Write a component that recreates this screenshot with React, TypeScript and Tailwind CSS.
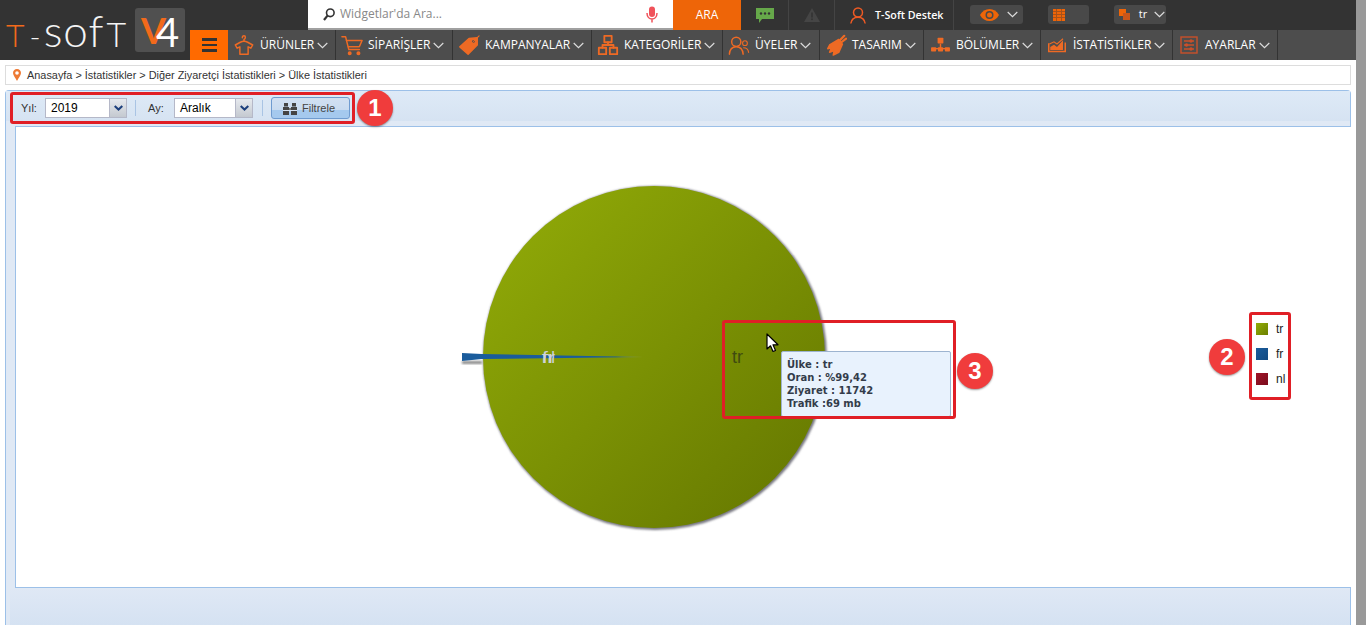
import type { ReactNode } from "react";

const ORANGE = "#ee6a24";

function Glyph({ children, size = 22 }: { children: ReactNode; size?: number }) {
  return (
    <svg width={size} height={size} viewBox="0 0 24 24" fill="none" stroke={ORANGE} strokeWidth={1.6} strokeLinecap="round" strokeLinejoin="round">
      {children}
    </svg>
  );
}

function Chevron({ className = "" }: { className?: string }) {
  return (
    <svg width="11" height="7" viewBox="0 0 11 7" fill="none" stroke="#dcdcdc" strokeWidth="1.2" className={className}>
      <polyline points="0.7,1 5.5,5.6 10.3,1" />
    </svg>
  );
}

const navItems: { label: string; width: string; icon: ReactNode }[] = [
  {
    label: "ÜRÜNLER",
    width: "w-[108px]",
    icon: (
      <Glyph>
        <path d="M8 9 L2.5 12 L4.5 15.5 L7.5 14 V22 H16.5 V14 L19.5 15.5 L21.5 12 L16 9 Q12 7 8 9 Z" />
        <path d="M12 8 V6 C14 5 14 2 12 2 C10.5 2 10.2 3 10.2 4" />
      </Glyph>
    ),
  },
  {
    label: "SİPARİŞLER",
    width: "w-[117px]",
    icon: (
      <Glyph>
        <path d="M1 3 H5 L8.5 17 H20" />
        <path d="M6 7 H23 L20 14 H8" />
        <circle cx="9.5" cy="21" r="1.4" fill={ORANGE} />
        <circle cx="19" cy="21" r="1.4" fill={ORANGE} />
      </Glyph>
    ),
  },
  {
    label: "KAMPANYALAR",
    width: "w-[139px]",
    icon: (
      <Glyph>
        <path d="M2 14 L12 5 L21 4 L21 12 L11 22 Z" fill={ORANGE} />
        <circle cx="17" cy="8" r="1.5" fill="#4d4d4d" stroke="none" />
        <path d="M17 8 L23 2" strokeWidth="1.2" />
      </Glyph>
    ),
  },
  {
    label: "KATEGORİLER",
    width: "w-[131px]",
    icon: (
      <Glyph>
        <rect x="8" y="2" width="8" height="7" strokeWidth="2" />
        <rect x="2" y="15" width="8" height="7" strokeWidth="2" />
        <rect x="14" y="15" width="8" height="7" strokeWidth="2" />
        <path d="M6 15 V12 H18 V15 M12 9 V12" strokeWidth="2" />
      </Glyph>
    ),
  },
  {
    label: "ÜYELER",
    width: "w-[97px]",
    icon: (
      <Glyph>
        <circle cx="9" cy="8.5" r="5" />
        <path d="M1.5 22 C2 16 5 14 9 14 C13 14 16 16 16.5 22" />
        <circle cx="18.5" cy="10" r="2.6" strokeWidth="1.2" />
        <path d="M17 15 C20 15 22 17 22.5 20" strokeWidth="1.2" />
      </Glyph>
    ),
  },
  {
    label: "TASARIM",
    width: "w-[104px]",
    icon: (
      <Glyph>
        <path d="M5 12 L15 6 L19 11 L15 20 L9 23 L10 18 L5 20 L7 15 L3 16 Z" fill={ORANGE} />
        <path d="M16 7 L21 2 M18 9 L23 5" strokeWidth="2.4" />
      </Glyph>
    ),
  },
  {
    label: "BÖLÜMLER",
    width: "w-[117px]",
    icon: (
      <svg width="19" height="16" viewBox="0 0 26 22" fill={ORANGE}>
        <rect x="9" y="1" width="8" height="8" rx="1" />
        <rect x="12" y="9" width="2" height="7" />
        <rect x="3" y="15" width="20" height="2" />
        <rect x="0" y="14" width="7" height="6" rx="1" />
        <rect x="9.5" y="14" width="7" height="6" rx="1" />
        <rect x="19" y="14" width="7" height="6" rx="1" />
      </svg>
    ),
  },
  {
    label: "İSTATİSTİKLER",
    width: "w-[132px]",
    icon: (
      <svg width="18" height="15" viewBox="0 0 24 20" fill="none" stroke={ORANGE} strokeWidth="1.4">
        <path d="M1 7 V17 M23 6 V17 M0 18 H24" strokeWidth="2" />
        <path d="M3 16 V12 L8 9 L12 12 L20 3 V16 Z" fill={ORANGE} stroke="none" />
        <path d="M2 8 L8 5 L12 8 L20 1" />
      </svg>
    ),
  },
  {
    label: "AYARLAR",
    width: "w-[105px]",
    icon: (
      <svg width="18" height="18" viewBox="0 0 18 18" fill="none" stroke="#c9502a" strokeWidth="1.4">
        <rect x="1" y="1" width="16" height="16" />
        <path d="M4 5 H14 M4 9 H14 M4 13 H14" />
        <circle cx="11" cy="5" r="1" fill="#c9502a" />
        <circle cx="6.5" cy="9" r="1" fill="#c9502a" />
        <circle cx="11" cy="13" r="1" fill="#c9502a" />
      </svg>
    ),
  },
];

function Badge({ n, className }: { n: number; className: string }) {
  return (
    <div className={`absolute w-[36px] h-[36px] rounded-full bg-[#f03c3c] shadow-[0_1px_2px_rgba(0,0,0,0.4)] flex items-center justify-center text-white text-[24px] font-bold ${className}`}>
      {n}
    </div>
  );
}

function SelectBox({ value, width }: { value: string; width: string }) {
  return (
    <div className={`${width} h-[20px] bg-white border border-[#b5b8c8] flex items-center`}>
      <span className="flex-1 pl-[5px] text-[12px] text-black">{value}</span>
      <div className="w-[17px] h-full bg-gradient-to-b from-[#e6e9ee] to-[#c4c9d0] border-l border-[#b5b8c8] flex items-center justify-center">
        <svg width="9" height="6" viewBox="0 0 9 6" fill="none" stroke="#1c3f7c" strokeWidth="2">
          <polyline points="0.7,1 4.5,4.6 8.3,1" />
        </svg>
      </div>
    </div>
  );
}

export default function App() {
  return (
    <div className="w-[1366px] h-[625px] overflow-hidden flex bg-white font-['Liberation_Sans',sans-serif] relative">
      <div className="w-[1356px] flex flex-col">
        {/* header */}
        <div className="h-[60px] bg-[#333333] flex">
          <div className="w-[190px] flex items-start pl-[6px] pt-[8px]">
            <div className="w-[129px] h-[44px] flex items-baseline font-['Lato',sans-serif] font-light text-[#f4f4f4] leading-[44px] whitespace-nowrap">
              <span className="text-[#f26a1b] text-[32px]">T</span>
              <span className="text-[30px] ml-[5px]">-</span>
              <span className="text-[44px] ml-[3px] tracking-[1px]">sof</span>
              <span className="text-[34px] ml-[2px]">T</span>
            </div>
            <div className="w-[50px] h-[44px] rounded-[3px] bg-[#505050] flex items-center justify-center font-['Lato',sans-serif] leading-none">
              <span className="text-[#f26a1b] text-[36px] font-bold">V</span>
              <span className="text-white text-[40px] -ml-[10px] mt-[3px]">4</span>
            </div>
          </div>
          <div className="flex-1 flex flex-col">
            <div className="h-[30px] flex text-white font-['Open_Sans',sans-serif]">
              <div className="ml-[118px] w-[365px] h-[30px] bg-white border-b-2 border-[#a0a0a0] flex items-center pl-[15px] pr-[15px] gap-[5px]">
                <svg width="12" height="13" viewBox="0 0 12 13" fill="none" stroke="#333" strokeWidth="1.6">
                  <circle cx="7.3" cy="4.8" r="3.8" />
                  <path d="M4.5 7.6 L1 12" strokeWidth="2.2" />
                </svg>
                <span className="flex-1 text-[12px] text-[#888]">Widgetlar'da Ara...</span>
                <svg width="12" height="17" viewBox="0 0 12 17" fill="none" stroke="#f0525a" strokeWidth="1.5">
                  <rect x="3" y="0.5" width="6" height="10.5" rx="3" fill="#f0525a" stroke="none" />
                  <path d="M1 7 C1 15 11 15 11 7 M6 13 V16.5" />
                </svg>
              </div>
              <div className="w-[68px] bg-[#ee6508] flex items-center justify-center text-[12px]">ARA</div>
              <div className="w-[48px] border-r border-[#444] flex items-center justify-center">
                <svg width="18" height="15" viewBox="0 0 18 15" fill="#66a84a">
                  <path d="M0 0 H18 V11 H6 L3 15 V11 H0 Z" />
                  <circle cx="5" cy="5.5" r="1.2" fill="#333" />
                  <circle cx="9" cy="5.5" r="1.2" fill="#333" />
                  <circle cx="13" cy="5.5" r="1.2" fill="#333" />
                </svg>
              </div>
              <div className="w-[46px] border-r border-[#444] flex items-center justify-center">
                <svg width="16" height="14" viewBox="0 0 16 14" fill="#454545">
                  <path d="M8 0 L16 14 H0 Z" />
                  <rect x="7.2" y="4.5" width="1.6" height="5" fill="#333" />
                  <rect x="7.2" y="10.5" width="1.6" height="1.6" fill="#333" />
                </svg>
              </div>
              <div className="w-[119px] border-r border-[#444] flex items-center pl-[15px] gap-[9px]">
                <svg width="16" height="17" viewBox="0 0 16 17" fill="none" stroke="#ee5a24" strokeWidth="1.5">
                  <circle cx="8" cy="5.5" r="4.5" />
                  <path d="M0.8 16.5 C1.5 12 4 10.3 8 10.3 C12 10.3 14.5 12 15.2 16.5" />
                </svg>
                <span className="text-[10.7px] font-semibold whitespace-nowrap">T-Soft Destek</span>
              </div>
              <div className="ml-[16px] mt-[5px] w-[53px] h-[19px] bg-[#494949] rounded-[3px] flex items-center pl-[10px] justify-between pr-[5px]">
                <svg width="19" height="12" viewBox="0 0 19 12" fill="#ee6508">
                  <path d="M0 6 C4 -2 15 -2 19 6 C15 14 4 14 0 6 Z" />
                  <circle cx="9.5" cy="6" r="4" fill="#494949" />
                  <circle cx="9.5" cy="6" r="2.5" fill="#ee6508" />
                </svg>
                <Chevron />
              </div>
              <div className="ml-[25px] mt-[5px] w-[41px] h-[19px] bg-[#494949] rounded-[3px] flex items-center pl-[5px]">
                <div className="grid grid-cols-3 grid-rows-4 gap-px w-[12px] h-[12px] bg-[#a8521a]">
                  {Array.from({ length: 12 }).map((_, i) => (
                    <div key={i} className="bg-[#ee6508]" />
                  ))}
                </div>
              </div>
              <div className="ml-[25px] mt-[5px] w-[52px] h-[19px] bg-[#494949] rounded-[3px] flex items-center pl-[5px] pr-[1px] justify-between">
                <svg width="11" height="11" viewBox="0 0 11 11" fill="#ee6508">
                  <rect x="0" y="0" width="7" height="7" />
                  <rect x="4" y="4" width="7" height="7" fill="#c9561a" />
                </svg>
                <span className="text-[11px] ml-[2px]">tr</span>
                <Chevron />
              </div>
            </div>
            <div className="h-[30px] bg-[#4d4d4d] flex text-white font-['Open_Sans',sans-serif] text-[12px]">
              <div className="w-[38px] bg-[#ff6a00] flex flex-col items-center justify-center gap-[3px]">
                <div className="w-[15px] h-[2.5px] bg-[#333]" />
                <div className="w-[15px] h-[2.5px] bg-[#333]" />
                <div className="w-[15px] h-[2.5px] bg-[#333]" />
              </div>
              {navItems.map((item) => (
                <div key={item.label} className={`${item.width} shrink-0 border-r border-[#333] flex items-center whitespace-nowrap`}>
                  <div className="w-[32px] flex items-center justify-center">{item.icon}</div>
                  <span>{item.label}</span>
                  <Chevron className="ml-[3px] mt-[1px]" />
                </div>
              ))}
            </div>
          </div>
        </div>

        {/* breadcrumb */}
        <div className="mt-[5px] ml-[5px] w-[1346px] h-[20px] border border-[#ddd] bg-white flex items-center pl-[7px] gap-[6px] text-[10.9px] text-[#333]">
          <svg width="8" height="12" viewBox="0 0 8 12">
            <path d="M4 0 C1.5 0 0 1.8 0 4 C0 6.5 2.5 8.5 4 12 C5.5 8.5 8 6.5 8 4 C8 1.8 6.5 0 4 0 Z" fill="#ee7a34" />
            <circle cx="4" cy="4" r="1.8" fill="#fff" />
          </svg>
          <span>Anasayfa &gt; İstatistikler &gt; Diğer Ziyaretçi İstatistikleri &gt; Ülke İstatistikleri</span>
        </div>

        {/* panel */}
        <div className="mt-[5px] ml-[5px] w-[1346px] flex-1 border border-[#9cc0e8] border-b-0 rounded-t-[4px] bg-[#e0e9f5] flex flex-col">
          <div className="h-[30px] pl-[15px] pt-[4px] flex items-center text-[11px] text-[#333] bg-gradient-to-b from-[#deeaf7] to-[#d6e3f2] shrink-0">
            <span className="w-[24px]">Yıl:</span>
            <SelectBox value="2019" width="w-[82px]" />
            <div className="w-px h-[16px] bg-[#a9c4e4] ml-[8px] mr-[12px]" />
            <span className="w-[26px]">Ay:</span>
            <SelectBox value="Aralık" width="w-[79px]" />
            <div className="w-px h-[16px] bg-[#a9c4e4] ml-[9px] mr-[8px]" />
            <div className="w-[79px] h-[22px] border border-[#6f9bd0] rounded-[3px] bg-[linear-gradient(#d2e0f2_0%,#c9dbf0_58%,#a5c9ee_60%,#a5c9ee_100%)] flex items-center pl-[11px] gap-[5px] text-[11px] text-[#444]">
              <svg width="14" height="13" viewBox="0 0 14 13" fill="#444">
                <rect x="0" y="5" width="6" height="8" />
                <rect x="8" y="5" width="6" height="8" />
                <rect x="1" y="1" width="4" height="3.5" />
                <rect x="9" y="1" width="4" height="3.5" />
                <rect x="6" y="6" width="2" height="3" fill="#777" />
                <rect x="0" y="8" width="14" height="1" fill="#d5e2f2" />
              </svg>
              Filtrele
            </div>
          </div>

          <div className="mt-[5px] ml-[9px] w-[1336px] h-[462px] bg-white border border-[#9cc0e8] border-r-0 relative shrink-0">
            <svg width="380" height="360" viewBox="0 0 380 360" className="absolute left-[437px] top-[51px]">
              <defs>
                <linearGradient id="pieGreen" x1="0" y1="0" x2="1" y2="1">
                  <stop offset="0%" stopColor="#93ad08" />
                  <stop offset="100%" stopColor="#637500" />
                </linearGradient>
                <linearGradient id="pieBlue" x1="0" y1="0" x2="1" y2="0">
                  <stop offset="0%" stopColor="#1a5c9c" />
                  <stop offset="85%" stopColor="#1a5c9c" />
                  <stop offset="100%" stopColor="#a8b070" />
                </linearGradient>
                <filter id="soft">
                  <feGaussianBlur stdDeviation="1" />
                </filter>
              </defs>
              <circle cx="202" cy="180" r="172" fill="#777780" filter="url(#soft)" />
              <circle cx="201" cy="179" r="171" fill="url(#pieGreen)" />
              <rect x="9" y="183" width="20" height="3" fill="#8a8a8a" filter="url(#soft)" />
              <polygon points="9,175 29,176 190,179 29,181 9,183" fill="url(#pieBlue)" />
              <text x="89" y="185" fontSize="16" fill="#cfd3d8" fontFamily="Liberation Sans" textLength="13" lengthAdjust="spacingAndGlyphs">fr</text>
              <text x="89" y="185" fontSize="16" fill="#cfd3d8" fontFamily="Liberation Sans" textLength="13" lengthAdjust="spacingAndGlyphs">nl</text>
              <text x="279" y="185" fontSize="18" fill="#3f4a10" fontFamily="Liberation Sans">tr</text>
            </svg>

            {/* legend */}
            <div className="absolute left-[1240px] top-[196px] flex flex-col gap-[13px] text-[12px] text-[#222]">
              <div className="flex items-center gap-[8px] h-[12px]"><div className="w-[12px] h-[12px] bg-gradient-to-br from-[#93ad08] to-[#6b7f00]" />tr</div>
              <div className="flex items-center gap-[8px] h-[12px]"><div className="w-[12px] h-[12px] bg-gradient-to-br from-[#1a5c9c] to-[#134a82]" />fr</div>
              <div className="flex items-center gap-[8px] h-[12px]"><div className="w-[12px] h-[12px] bg-gradient-to-br from-[#a01428] to-[#7a0c1c]" />nl</div>
            </div>
          </div>
          <div className="flex-1 ml-[4px] mt-px bg-gradient-to-b from-[#dfe8f5] to-[#d5e2f2]" />
        </div>
      </div>
      <div className="w-[10px] bg-[#999999]" />

      {/* tooltip */}
      <div className="absolute left-[781px] top-[351px] w-[170px] h-[66px] bg-[#e8f2fd] border border-[#9db4d0] rounded-[2px] pl-[5px] pt-[6px] font-['DejaVu_Sans',sans-serif] font-bold text-[10px] leading-[13px] text-[#333c4a]">
        <div>Ülke : tr</div>
        <div>Oran : %99,42</div>
        <div>Ziyaret : 11742</div>
        <div>Trafik :69 mb</div>
      </div>
      <svg width="14" height="20" viewBox="0 0 14 20" className="absolute left-[766px] top-[333px]">
        <path d="M1 1 V16 L4.5 12.8 L7 18.5 L9.5 17.5 L7 11.8 H12 Z" fill="#fff" stroke="#000" strokeWidth="1.2" strokeLinejoin="round" />
      </svg>

      {/* annotation overlays */}
      <div className="absolute left-[10px] top-[92px] w-[345px] h-[32px] border-[3px] border-[#e01f26] rounded-[3px]" />
      <div className="absolute left-[1249px] top-[312px] w-[42px] h-[88px] border-[3px] border-[#e01f26] rounded-[3px]" />
      <div className="absolute left-[722px] top-[320px] w-[234px] h-[99px] border-[3px] border-[#e01f26] rounded-[3px]" />
      <Badge n={1} className="left-[357px] top-[90px]" />
      <Badge n={2} className="left-[1209px] top-[339px]" />
      <Badge n={3} className="left-[957px] top-[353px]" />
    </div>
  );
}
